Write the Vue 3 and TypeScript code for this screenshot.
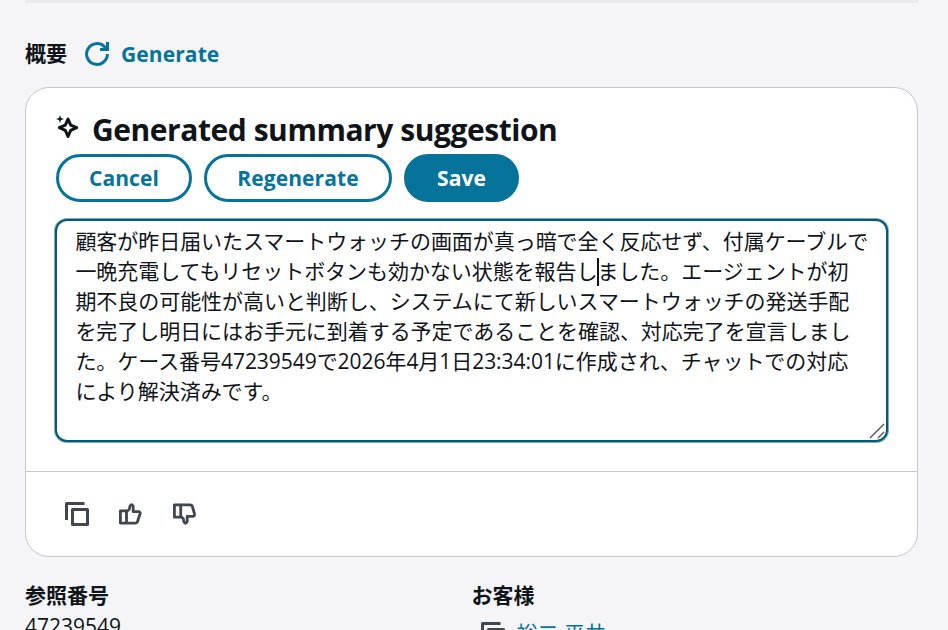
<script setup lang="ts">
interface SummaryLine {
  before: string
  after?: string
}

const lines: SummaryLine[] = [
  { before: '顧客が昨日届いたスマートウォッチの画面が真っ暗で全く反応せず、付属ケーブルで' },
  { before: '一晩充電してもリセットボタンも効かない状態を報告し', after: 'ました。エージェントが初' },
  { before: '期不良の可能性が高いと判断し、システムにて新しいスマートウォッチの発送手配' },
  { before: 'を完了し明日にはお手元に到着する予定であることを確認、対応完了を宣言しまし' },
  { before: 'た。ケース番号47239549で2026年4月1日23:34:01に作成され、チャットでの対応' },
  { before: 'により解決済みです。' },
]
</script>

<template>
  <main class="page">
    <div class="rule"></div>
    <header class="section-head">
      <span class="label">概要</span>
      <button class="link-button" type="button">
        <svg class="refresh" width="24" height="24" viewBox="0 0 24 24" fill="none" stroke="currentColor" stroke-width="3">
          <path d="M22.4 12A10.4 10.4 0 1 1 19.2 4.5L22 7.4" />
          <path d="M22.5 0V7.5H15" />
        </svg>
        <span>Generate</span>
      </button>
    </header>

    <section class="card">
      <div class="card-body">
        <h2 class="title">
          <svg class="spark" width="24" height="25" viewBox="0 0 24 25">
            <path d="M12 4.1L14.7 10.1L20.7 12.7L14.7 15.4L12 21.4L9.3 15.4L3.3 12.7L9.3 10.1Z" fill="none" stroke="currentColor" stroke-width="3" stroke-linejoin="round" />
            <path d="M4 0L5 3L8 4L5 5L4 8L3 5L0 4L3 3Z" fill="currentColor" />
          </svg>
          <span>Generated summary suggestion</span>
        </h2>
        <div class="actions">
          <button class="btn cancel" type="button">Cancel</button>
          <button class="btn regenerate" type="button">Regenerate</button>
          <button class="btn save" type="button">Save</button>
        </div>
        <div class="editor" role="textbox" aria-multiline="true">
          <div v-for="(line, i) in lines" :key="i" class="line">
            <span>{{ line.before }}</span><i v-if="line.after" class="caret"></i><span v-if="line.after">{{ line.after }}</span>
          </div>
          <svg class="grip" width="16" height="16" viewBox="0 0 16 16" fill="none" stroke="#5b5e61" stroke-width="1.5">
            <path d="M1 15L15 1M9 15L15 9" />
          </svg>
        </div>
      </div>
      <footer class="card-foot">
        <svg class="copy" width="24" height="24" viewBox="0 0 24 24" fill="none" stroke="currentColor" stroke-width="3" stroke-linejoin="round">
          <path d="M19.5 1.5H1.5V18" />
          <path d="M7.5 7.5H22.5V22.5H7.5Z" />
        </svg>
        <svg class="up" width="23" height="22" viewBox="0 0 23 22" fill="none" stroke="currentColor" stroke-width="2.8" stroke-linejoin="round">
          <path d="M1.4 7.8H7.5V20.1H1.4Z" />
          <path d="M7.5 8.7L10.3 6.3L11.1 2.8L12.6 1.6L14.2 3V8.7H20.4L21.3 10L18.3 19.3L16.6 20.1H7.5" />
        </svg>
        <svg class="down" width="23" height="22" viewBox="0 0 23 22" fill="none" stroke="currentColor" stroke-width="2.8" stroke-linejoin="round">
          <path d="M1.4 1.9H7.7V14.2H1.4Z" />
          <path d="M7.7 1.9H17.5L19.2 2.8L21.4 10.5V12.6L20.2 13.3H14.2V18.7L12.6 20.4L11 19.2L10.3 15.8L7.7 13.3" />
        </svg>
      </footer>
    </section>

    <div class="details">
      <div class="detail">
        <div class="label">参照番号</div>
        <div class="value">47239549</div>
      </div>
      <div class="detail">
        <div class="label">お客様</div>
        <div class="value customer">
          <svg width="24" height="24" viewBox="0 0 24 24" fill="none" stroke="#424650" stroke-width="3" stroke-linejoin="round">
            <path d="M19.5 1.5H1.5V18" />
            <path d="M7.5 7.5H22.5V22.5H7.5Z" />
          </svg>
          <a>裕二 平井</a>
        </div>
      </div>
    </div>
  </main>
</template>

<style>
body {
  background: #f5f5f8;
  overflow: hidden;
}
</style>

<style scoped>
.page {
  box-sizing: border-box;
  width: 948px;
  height: 630px;
  overflow: hidden;
  padding: 0 30px 0 25px;
  background: #f5f5f8;
  color: #0f141a;
  font: 21px/30px "Open Sans", "Noto Sans CJK JP", sans-serif;
}
.rule {
  height: 3px;
  background: #e9eaec;
}
.section-head {
  display: flex;
  align-items: center;
  height: 30px;
  padding-top: 36px;
  margin-bottom: 18px;
}
.label {
  position: relative;
  top: -1px;
  font-weight: 700;
}
button {
  font: inherit;
  margin: 0;
}
.link-button {
  display: flex;
  align-items: center;
  gap: 12px;
  padding: 0;
  margin-left: 18px;
  border: 0;
  background: none;
  color: #06749a;
  font-weight: 700;
  letter-spacing: 0.1px;
}
.card {
  box-sizing: border-box;
  width: 893px;
  height: 470px;
  border: 1px solid #c6c6cd;
  border-radius: 24px;
  background: #fff;
}
.card-body {
  box-sizing: border-box;
  height: 384px;
  padding: 24px 29px 0;
  border-bottom: 1px solid #c6c6cd;
}
.title {
  display: flex;
  align-items: center;
  height: 36px;
  margin: 0 0 6px 1px;
  gap: 12px;
  font-size: 30px;
  line-height: 36px;
  font-weight: 700;
  letter-spacing: -0.45px;
}
.spark {
  margin-top: -5px;
}
.actions {
  display: flex;
  gap: 12px;
  margin-left: 1px;
}
.btn {
  box-sizing: border-box;
  height: 48px;
  padding: 0;
  border: 3px solid #06749a;
  border-radius: 24px;
  background: #fff;
  color: #06749a;
  font-weight: 700;
  letter-spacing: 0.1px;
}
.cancel {
  width: 136px;
}
.regenerate {
  width: 188px;
}
.save {
  width: 115px;
  background: #06749a;
  color: #fff;
}
.editor {
  position: relative;
  box-sizing: border-box;
  width: 833px;
  height: 223px;
  margin-top: 17px;
  padding: 5px 0 0 18.4px;
  border: 2px solid #005b7b;
  border-radius: 12px;
  background: #fff;
  box-shadow: 0 0 0 1px #7fadbd;
  letter-spacing: -0.05px;
}
.line {
  height: 30px;
  white-space: nowrap;
}
.caret {
  display: inline-block;
  width: 2px;
  height: 28px;
  margin: 0 -2px 0 0;
  background: #0f141a;
  vertical-align: -7px;
}
.grip {
  position: absolute;
  right: 1px;
  bottom: 1px;
}
.card-foot {
  display: flex;
  align-items: center;
  height: 84px;
  padding-left: 39px;
  color: #424650;
}
.up {
  margin-left: 30px;
}
.down {
  margin-left: 30.5px;
}
.details {
  display: grid;
  grid-template-columns: 446.5px 1fr;
  margin-top: 24px;
}
.customer {
  display: flex;
  align-items: center;
  gap: 12px;
  padding: 9px 0 0 9px;
}
.customer a {
  margin-top: -2px;
  color: #06749a;
}
</style>
